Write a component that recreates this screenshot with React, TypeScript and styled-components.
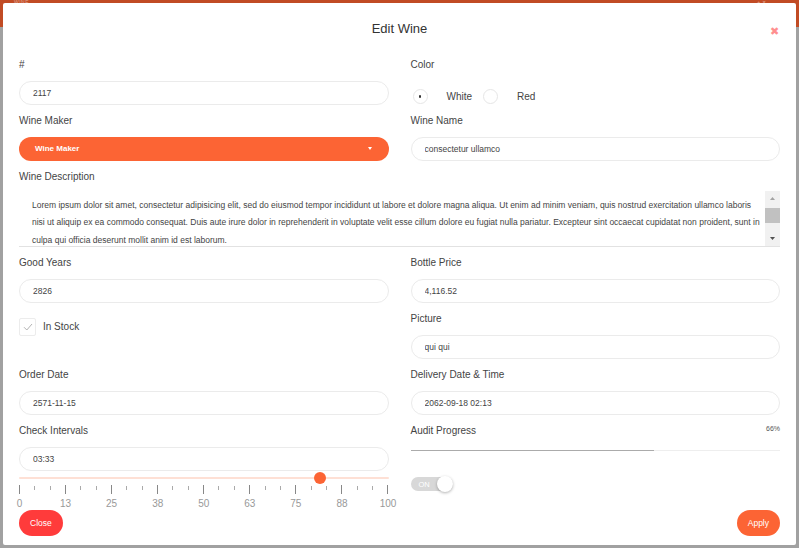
import * as React from 'react';
import styled, { createGlobalStyle } from 'styled-components';

const orange = '#fc6434';
const red = '#ff3b3b';
const labelColor = '#444';

const description =
	'Lorem ipsum dolor sit amet, consectetur adipisicing elit, sed do eiusmod tempor incididunt ut labore et dolore magna aliqua. Ut enim ad minim veniam, quis nostrud exercitation ullamco laboris nisi ut aliquip ex ea commodo consequat. Duis aute irure dolor in reprehenderit in voluptate velit esse cillum dolore eu fugiat nulla pariatur. Excepteur sint occaecat cupidatat non proident, sunt in culpa qui officia deserunt mollit anim id est laborum.\n\n';

const scaleLabels = ['0', '13', '25', '38', '50', '63', '75', '88', '100'];

const App = () => {
	const areaRef = React.useRef<HTMLTextAreaElement>(null);

	React.useEffect(() => {
		if (areaRef.current) areaRef.current.scrollTop = 7;
	}, []);

	return (
		<>
			<GlobalStyle />
			<Page>
				<AppBar>
					<AppTitle>WINE</AppTitle>
					<AppTitle>+ ✕</AppTitle>
				</AppBar>
				<Modal>
					<Header>
						<span />
						<Title>Edit Wine</Title>
						<CloseIcon>✖</CloseIcon>
					</Header>
					<Body>
						<Field>
							<Label>#</Label>
							<Input defaultValue="2117" />
						</Field>
						<Field>
							<Label>Color</Label>
							<RadioGroup>
								<RadioOption>
									<RadioCircle checked />
									White
								</RadioOption>
								<RadioOption>
									<RadioCircle />
									Red
								</RadioOption>
							</RadioGroup>
						</Field>

						<Field>
							<Label>Wine Maker</Label>
							<Select>
								<span>Wine Maker</span>
								<Caret />
							</Select>
						</Field>
						<Field>
							<Label>Wine Name</Label>
							<Input defaultValue="consectetur ullamco" />
						</Field>

						<Field wide>
							<Label tight>Wine Description</Label>
							<DescriptionBox>
								<TextArea ref={areaRef} defaultValue={description} />
								<ScrollBar>
									<ScrollButton>
										<svg width="5" height="3" viewBox="0 0 5 3">
											<path d="M0 3 L2.5 0 L5 3 Z" fill="#a3a3a3" />
										</svg>
									</ScrollButton>
									<ScrollTrack>
										<ScrollThumb />
									</ScrollTrack>
									<ScrollButton>
										<svg width="5" height="3" viewBox="0 0 5 3">
											<path d="M0 0 L2.5 3 L5 0 Z" fill="#505050" />
										</svg>
									</ScrollButton>
								</ScrollBar>
							</DescriptionBox>
						</Field>

						<Field>
							<Label>Good Years</Label>
							<Input defaultValue="2826" />
						</Field>
						<Field>
							<Label>Bottle Price</Label>
							<Input defaultValue="4,116.52" />
						</Field>

						<Field>
							<CheckRow>
								<CheckBox>
									<svg width="10" height="8" viewBox="0 0 10 8">
										<path d="M1 4.2 L3.8 7 L9 1" fill="none" stroke="#aaa" strokeWidth="0.9" />
									</svg>
								</CheckBox>
								In Stock
							</CheckRow>
						</Field>
						<Field>
							<Label>Picture</Label>
							<Input defaultValue="qui qui" />
						</Field>

						<Field>
							<Label>Order Date</Label>
							<Input defaultValue="2571-11-15" />
						</Field>
						<Field>
							<Label>Delivery Date &amp; Time</Label>
							<Input defaultValue="2062-09-18 02:13" />
						</Field>

						<Field>
							<Label>Check Intervals</Label>
							<Input defaultValue="03:33" />
							<Range type="range" min={0} max={100} step={0.5} defaultValue={82.5} />
							<Ticks>
								{Array.from({ length: 25 }).map((_, i) => (
									<Tick key={i} major={i % 3 === 0} />
								))}
							</Ticks>
							<ScaleLabels>
								{scaleLabels.map((l) => (
									<ScaleLabel key={l}>{l}</ScaleLabel>
								))}
							</ScaleLabels>
						</Field>
						<Field>
							<ProgressHead>
								<Label>Audit Progress</Label>
								<Percent>66%</Percent>
							</ProgressHead>
							<ProgressTrack>
								<ProgressFill style={{ width: '66%' }} />
							</ProgressTrack>
							<Switch>
								<SwitchText>ON</SwitchText>
								<Knob />
							</Switch>
						</Field>
					</Body>
					<Footer>
						<Button color={red}>Close</Button>
						<Button color={orange}>Apply</Button>
					</Footer>
				</Modal>
			</Page>
		</>
	);
};

const GlobalStyle = createGlobalStyle`
	html, body {
		margin: 0;
		padding: 0;
	}
	body {
		background: #a1a1a1;
		font-family: "Liberation Sans", Arial, sans-serif;
		overflow: hidden;
	}
	* {
		box-sizing: border-box;
	}
`;

const Page = styled.div`
	position: relative;
	width: 799px;
	height: 548px;
`;

const AppBar = styled.div`
	height: 27px;
	background: #c14b24;
	display: flex;
	justify-content: space-between;
	padding: 0 32px 0 14px;
`;

const AppTitle = styled.span`
	font-size: 5px;
	line-height: 5px;
	height: 5px;
	color: #e2a996;
	letter-spacing: 0.5px;
`;

const Modal = styled.div`
	position: absolute;
	top: 3px;
	left: 3px;
	width: 793px;
	height: 542px;
	background: #fff;
	border-radius: 2px;
	padding: 0 16px 9px;
	display: flex;
	flex-direction: column;
`;

const Header = styled.div`
	height: 44.5px;
	display: grid;
	grid-template-columns: 1fr auto 1fr;
	align-items: center;
	margin-bottom: 10px;
`;

const Title = styled.h2`
	margin: 6px 0 0;
	font-size: 13px;
	font-weight: normal;
	color: #333;
`;

const CloseIcon = styled.span`
	justify-self: end;
	margin: 12px 1px 0 0;
	font-size: 11px;
	color: #ff8f8f;
`;

const Body = styled.div`
	display: grid;
	grid-template-columns: 1fr 1fr;
	column-gap: 22px;
	row-gap: 9px;
`;

const Field = styled.div<{ wide?: boolean }>`
	grid-column: ${(props) => (props.wide ? '1 / -1' : 'auto')};
	display: flex;
	flex-direction: column;
`;

const Label = styled.label<{ tight?: boolean }>`
	font-size: 10px;
	line-height: 14px;
	color: ${labelColor};
	margin-bottom: ${(props) => (props.tight ? '7px' : '9px')};
`;

const Input = styled.input`
	height: 24px;
	width: 100%;
	border: 1px solid #ebebeb;
	border-radius: 12px;
	padding: 0 13px;
	font-family: inherit;
	font-size: 8.5px;
	color: #444;
	outline: none;
`;

const RadioGroup = styled.div`
	display: flex;
	align-items: center;
	height: 24px;
	padding: 8px 0 0 2px;
`;

const RadioOption = styled.label`
	display: flex;
	align-items: center;
	gap: 19px;
	margin-right: 11px;
	font-size: 10px;
	color: ${labelColor};
`;

const RadioCircle = styled.span<{ checked?: boolean }>`
	width: 15px;
	height: 15px;
	border-radius: 50%;
	border: 1px solid #e6e6e6;
	display: flex;
	align-items: center;
	justify-content: center;
	&::after {
		content: '';
		width: 2.5px;
		height: 2.5px;
		border-radius: 50%;
		background: ${(props) => (props.checked ? '#333' : 'transparent')};
	}
`;

const Select = styled.div`
	height: 24px;
	border-radius: 12px;
	background: ${orange};
	color: #fff;
	font-size: 8px;
	font-weight: bold;
	padding: 0 17px 0 16px;
	display: flex;
	align-items: center;
	justify-content: space-between;
`;

const Caret = styled.span`
	width: 0;
	height: 0;
	border-left: 2.5px solid transparent;
	border-right: 2.5px solid transparent;
	border-top: 3px solid #fff;
`;

const DescriptionBox = styled.div`
	display: flex;
	height: 56px;
	border-bottom: 1px solid #e2e2e2;
`;

const TextArea = styled.textarea`
	flex: 1;
	height: 100%;
	border: none;
	padding: 13px 5px 0 13px;
	font-family: inherit;
	font-size: 8.5px;
	line-height: 17.5px;
	color: #444;
	resize: none;
	outline: none;
	overflow: hidden;
`;

const ScrollBar = styled.div`
	width: 15px;
	background: #f1f1f1;
	display: flex;
	flex-direction: column;
`;

const ScrollButton = styled.div`
	height: 15px;
	display: flex;
	align-items: center;
	justify-content: center;
`;

const ScrollTrack = styled.div`
	flex: 1;
	padding-top: 2px;
`;

const ScrollThumb = styled.div`
	height: 15px;
	background: #c1c1c1;
`;

const CheckRow = styled.label`
	display: flex;
	align-items: center;
	gap: 7px;
	margin-top: 6px;
	font-size: 10px;
	color: ${labelColor};
`;

const CheckBox = styled.span`
	width: 17px;
	height: 18px;
	border: 1px solid #ececec;
	border-radius: 2px;
	display: flex;
	align-items: center;
	justify-content: center;
`;

const Range = styled.input`
	-webkit-appearance: none;
	appearance: none;
	width: 100%;
	height: 12px;
	margin: 1px 0 0;
	background: transparent;
	&::-webkit-slider-runnable-track {
		height: 2px;
		background: #fee0d5;
		border-radius: 1px;
	}
	&::-webkit-slider-thumb {
		-webkit-appearance: none;
		width: 12px;
		height: 12px;
		margin-top: -5px;
		border-radius: 50%;
		background: ${orange};
		border: none;
	}
`;

const Ticks = styled.div`
	display: flex;
	justify-content: space-between;
	align-items: flex-start;
	height: 9px;
	margin-top: 1px;
`;

const Tick = styled.span<{ major: boolean }>`
	width: 1px;
	height: ${(props) => (props.major ? '9px' : '4px')};
	margin-top: ${(props) => (props.major ? '0' : '1px')};
	background: ${(props) => (props.major ? '#888' : '#aaa')};
`;

const ScaleLabels = styled.div`
	display: flex;
	justify-content: space-between;
	margin: 4px 0 0;
	padding: 0 0.5px;
`;

const ScaleLabel = styled.span`
	width: 0;
	display: flex;
	justify-content: center;
	white-space: nowrap;
	font-size: 10px;
	line-height: 12px;
	color: #999;
`;

const ProgressHead = styled.div`
	display: flex;
	justify-content: space-between;
	align-items: flex-start;
`;

const Percent = styled.span`
	font-size: 7px;
	line-height: 10px;
	color: #555;
`;

const ProgressTrack = styled.div`
	height: 1.5px;
	background: #eee;
	margin-top: 3px;
`;

const ProgressFill = styled.div`
	height: 100%;
	background: #ababab;
`;

const Switch = styled.div`
	margin-top: 26px;
	width: 42px;
	height: 14px;
	border-radius: 7px;
	background: #d8d8d8;
	display: flex;
	align-items: center;
	justify-content: space-between;
	padding-left: 8px;
`;

const SwitchText = styled.span`
	font-size: 7.5px;
	color: #fff;
`;

const Knob = styled.span`
	width: 16px;
	height: 16px;
	border-radius: 50%;
	background: #fff;
	box-shadow: 0 1px 3px rgba(0, 0, 0, 0.3);
`;

const Footer = styled.div`
	margin-top: auto;
	display: flex;
	justify-content: space-between;
`;

const Button = styled.button<{ color: string }>`
	height: 26px;
	padding: 0 11px;
	border: none;
	border-radius: 13px;
	background: ${(props) => props.color};
	color: #fff;
	font-family: inherit;
	font-size: 8.5px;
	cursor: pointer;
`;

export default App;
